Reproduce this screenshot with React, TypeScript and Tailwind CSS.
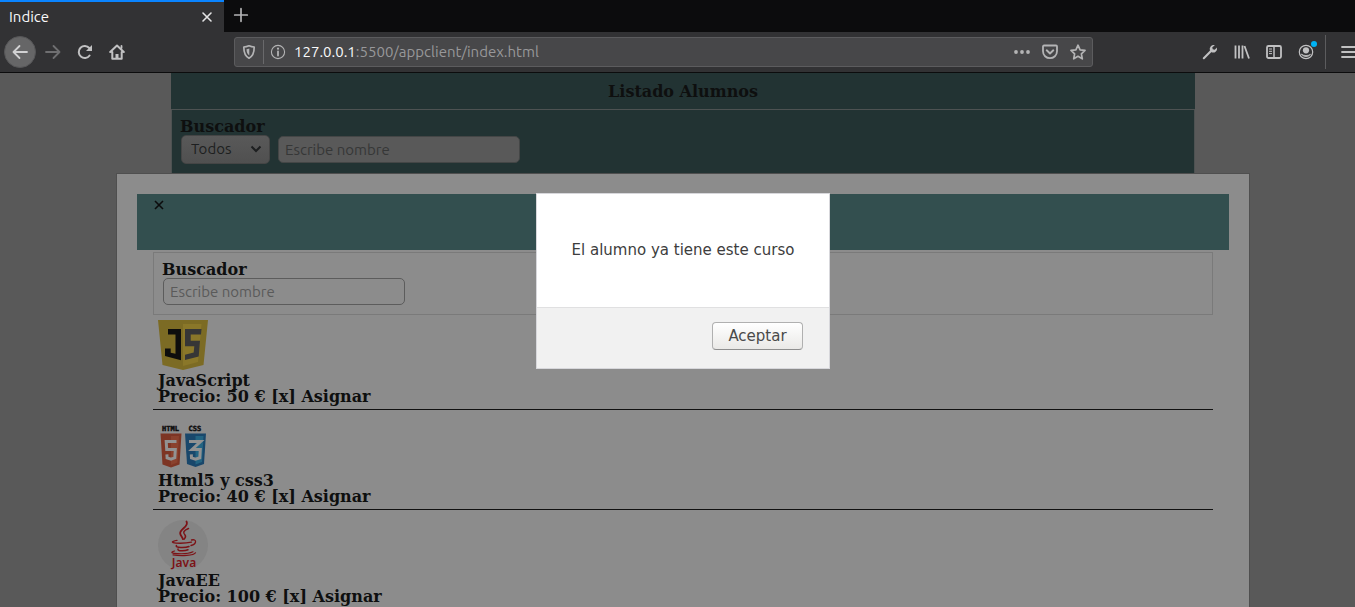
import type { ReactNode } from "react";

const uiFont = "font-['Ubuntu','Noto_Sans',sans-serif]";

function Icon({ children, className = "" }: { children: ReactNode; className?: string }) {
  return (
    <svg
      viewBox="0 0 16 16"
      className={`size-4 shrink-0 ${className}`}
      fill="none"
      stroke="currentColor"
      strokeWidth="1.8"
      strokeLinecap="round"
      strokeLinejoin="round"
      aria-hidden="true"
    >
      {children}
    </svg>
  );
}

function ToolButton({ label, className = "", children }: { label: string; className?: string; children: ReactNode }) {
  return (
    <button
      type="button"
      aria-label={label}
      className={`flex size-8 shrink-0 items-center justify-center text-[#c1c1c2] ${className}`}
    >
      {children}
    </button>
  );
}

function TabStrip() {
  return (
    <div className="flex h-8 bg-[#0c0c0d]">
      <div className="flex w-56 items-center justify-between border-t-2 border-[#0a84ff] bg-[#323234] pr-[9px] pl-[9px]">
        <span className="text-[15px] leading-5 text-[#f9f9fa]">Indice</span>
        <button type="button" aria-label="Cerrar pestaña" className="flex size-4 items-center justify-center text-[#e4e4e5]">
          <Icon>
            <path d="M4 4l8 8M12 4l-8 8" strokeWidth="1.6" />
          </Icon>
        </button>
      </div>
      <button type="button" aria-label="Nueva pestaña" className="flex w-[34px] items-center justify-center pb-0.5 text-[#b4b4b5]">
        <Icon>
          <path d="M8 1.700v12.600M1.700 8h12.600" strokeWidth="1.700" />
        </Icon>
      </button>
    </div>
  );
}

function AddressBar() {
  return (
    <div className="flex h-[30px] min-w-0 flex-1 items-center rounded-[3px] border border-[#5c5c5e] bg-[#474749] text-[#b4b4b5]">
      <div className="flex w-7 shrink-0 justify-center">
        <Icon>
          <path d="M8 1.800c2 .9 3.700 1.200 5.200 1.200 0 5.400-1.200 9.200-5.200 11.200C4 12.200 2.800 8.400 2.800 3 4.300 3 6 2.700 8 1.800z" strokeWidth="1.700" />
          <path d="M8.300 4.600c-1 .4-1.800.6-2.800.7.1 3 .8 4.900 2.800 6.200z" fill="currentColor" stroke="none" />
        </Icon>
      </div>
      <span className="mr-[6px] h-6 w-px bg-[#69696b]" />
      <Icon>
        <circle cx="8" cy="8" r="6.600" strokeWidth="1.100" />
        <path d="M8 7.500v4" strokeWidth="1.800" />
        <circle cx="8" cy="4.700" r="1.100" fill="currentColor" stroke="none" />
      </Icon>
      <span className="ml-2 flex-1 truncate text-[15px] leading-5 text-[#98989a]">
        <span className="text-[#f9f9fa]">127.0.0.1</span>:5500/appclient/index.html
      </span>
      <div className="flex shrink-0 items-center gap-3 pr-[6px]">
        <button type="button" aria-label="Acciones de página">
          <Icon>
            <g fill="currentColor" stroke="none">
              <circle cx="2" cy="8" r="1.900" />
              <circle cx="8" cy="8" r="1.900" />
              <circle cx="14" cy="8" r="1.900" />
            </g>
          </Icon>
        </button>
        <button type="button" aria-label="Guardar en Pocket">
          <Icon>
            <path d="M2 1.500h12a1 1 0 0 1 1 1V7.300c0 4-3.200 6.900-7 6.900S1 11.300 1 7.300V2.500a1 1 0 0 1 1-1z" strokeWidth="1.800" />
            <path d="M4.700 6.300L8 9.500l3.300-3.200" strokeWidth="1.900" />
          </Icon>
        </button>
        <button type="button" aria-label="Añadir a marcadores">
          <Icon>
            <path d="M8 1.200l2.100 4.600 4.900.6-3.600 3.400.9 5L8 12.300l-4.300 2.500.9-5L1 6.400l4.900-.6z" strokeWidth="1.700" />
          </Icon>
        </button>
      </div>
    </div>
  );
}

function Toolbar() {
  return (
    <div className="flex h-[41px] items-center border-b border-[#0c0c0d] bg-[#323234] pl-1">
      <ToolButton label="Atrás" className="mr-px rounded-full border border-[#565658] bg-[#666667]">
        <Icon className="text-[#d2d2d3]">
          <path d="M15 8H1.500M7.500 2L1.500 8l6 6" />
        </Icon>
      </ToolButton>
      <ToolButton label="Adelante">
        <Icon className="text-[#6f6f71]">
          <path d="M1 8h13.500M8.500 2l6 6-6 6" />
        </Icon>
      </ToolButton>
      <ToolButton label="Recargar">
        <Icon>
          <path d="M12.600 11.500A6 6 0 1 1 12.300 4" strokeWidth="2" />
          <path d="M15 1v6H9z" fill="currentColor" stroke="none" />
        </Icon>
      </ToolButton>
      <ToolButton label="Inicio">
        <Icon>
          <path d="M1.200 8L8 1.500 14.800 8M3.300 8v6.700h9.400V8" strokeWidth="2" />
          <path d="M8 15v-5" strokeWidth="3" strokeLinecap="butt" />
          <path d="M12.500 2v2" />
        </Icon>
      </ToolButton>
      <span className="w-[101px] shrink-0" />
      <AddressBar />
      <span className="w-[101px] shrink-0" />
      <ToolButton label="Herramientas">
        <Icon>
          <path d="M1.800 14.200L9 7" strokeWidth="2.100" />
          <path d="M12.900 1.300a4 4 0 0 0-5 5.100l2 2a4 4 0 0 0 5-4.900l-2.200 2.200-2-.4-.4-2z" fill="currentColor" stroke="none" />
        </Icon>
      </ToolButton>
      <ToolButton label="Catálogo">
        <Icon>
          <path d="M1.500 1.500v13M5 1.500v13M8.500 1.500v13M10.500 2l4.500 12.500" strokeLinecap="butt" />
        </Icon>
      </ToolButton>
      <ToolButton label="Barras laterales">
        <Icon>
          <rect x="1" y="2" width="14" height="12" rx="1.500" />
          <path d="M8 2v12" strokeWidth="1.500" />
          <path d="M3 5h3M3 7.300h3M3 9.600h3" strokeWidth="1" strokeLinecap="butt" />
        </Icon>
      </ToolButton>
      <ToolButton label="Cuenta" className="relative">
        <Icon>
          <circle cx="8" cy="8" r="6.700" strokeWidth="1.200" />
          <circle cx="8" cy="6.300" r="3.100" fill="currentColor" stroke="none" />
          <path d="M3.500 10.300c2.500 1.700 6.500 1.700 9 0a5.400 5.400 0 0 1-9 0z" fill="currentColor" strokeWidth=".8" />
        </Icon>
        <span className="absolute top-[5px] right-[5px] size-[6px] rounded-full bg-[#00b3f4]" />
      </ToolButton>
      <span className="mx-[3px] h-[34px] w-px shrink-0 bg-[#5c5c5e]" />
      <button type="button" aria-label="Abrir menú" className="flex h-8 w-[26px] shrink-0 items-center justify-end text-[#c1c1c2]">
        <Icon>
          <path d="M3 3h13M3 8h13M3 13h13" />
        </Icon>
      </button>
    </div>
  );
}

function StudentPage() {
  return (
    <main className="flex justify-center pl-[11px]">
      <section className="w-full max-w-[1024px] bg-[#223333]">
        <h1 className="pt-[11px] pb-[9px] text-center text-[16px] leading-4 font-bold">Listado Alumnos</h1>
        <form className="border border-[#4d5252] px-2 py-[9px]">
          <label htmlFor="student-name" className="block text-[16px] leading-4 font-bold">
            Buscador
          </label>
          <div className={`flex items-center gap-2 pl-px text-[15px] ${uiFont}`}>
            <div className="relative">
              <select
                aria-label="Filtro"
                className="block h-[29px] w-[89px] appearance-none rounded-[5px] border border-[#454545] bg-linear-to-b from-[#595959] to-[#505050] pl-[9px] text-[#1d1f20]"
              >
                <option>Todos</option>
              </select>
              <svg viewBox="0 0 12 8" className="pointer-events-none absolute top-[10px] right-2 h-2 w-3" fill="none" stroke="#1d1f20" strokeWidth="2" aria-hidden="true">
                <path d="M1.500 1.500L6 6l4.500-4.500" />
              </svg>
            </div>
            <input
              id="student-name"
              type="text"
              placeholder="Escribe nombre"
              className="h-[27px] w-[242px] rounded-[5px] border border-[#444646] bg-[#595959] px-1.5 placeholder:text-[#363737]"
            />
          </div>
        </form>
      </section>
    </main>
  );
}

function JsLogo() {
  return (
    <svg viewBox="0 0 50 50" className="size-[50px]" role="img" aria-label="JavaScript">
      <path d="M0 0h50l-4.500 45L25 50 4.500 45z" fill="#7c6b24" />
      <path d="M25 4h18.500l-3.500 38L25 46z" fill="#8a7729" />
      <path d="M10 9h13v31.200L7 36v-7.500h5.700v4.300l4.800 1V14.500H10z" fill="#0d0d0d" />
      <path d="M27 9h16.500l-.5 5.500H32.700v6.300H42l-1.300 15.700L27 40v-5.300l8.700-2.200.6-6.200H27z" fill="#363636" />
    </svg>
  );
}

function HtmlCssLogo() {
  return (
    <svg viewBox="0 0 50 50" className="size-[50px]" role="img" aria-label="HTML5 y CSS3">
      <g fill="#111111" stroke="#111111" strokeWidth=".5" fontFamily="DejaVu Sans Mono, monospace" fontWeight="700" fontSize="7">
        <text x="4" y="11">HTML</text>
        <text x="30.500" y="11">CSS</text>
      </g>
      <path d="M2.500 13.500h21l-2 31L13 47.500 4.500 44.500z" fill="#7d3524" />
      <path d="M13 16h8l-1.500 26.500L13 45z" fill="#8a412d" />
      <path d="M18.500 21.500H8.200l.5 8h8.600l-.5 8.300-3.800 1.400-3.900-1.400-.2-3.400" fill="none" stroke="#929292" strokeWidth="3" />
      <path d="M27 13.500h21l-2 30.500-8.500 3L29 44z" fill="#19476b" />
      <path d="M37.500 16h8L44 42l-6.500 2.500z" fill="#236482" />
      <path d="M31 21.500h11.700L34 29.500h8.300l-.5 8.300-4.300 1.400-4-1.400-.2-3.400" fill="none" stroke="#929292" strokeWidth="3" />
    </svg>
  );
}

function JavaLogo() {
  return (
    <svg viewBox="0 0 50 50" className="size-[50px]" role="img" aria-label="Java">
      <circle cx="25" cy="25" r="25" fill="#848484" />
      <g fill="none" stroke="#7c1216" strokeLinecap="round">
        <path d="M28.500 1.500c3 5-7 7.500-6.300 12 .3 2.200 2.300 3.500 2.800 5.700" strokeWidth="1.800" />
        <path d="M30.500 8.500c-5 2-6 4-3.500 6.500 1.200 1.400.2 3-1 4.200" strokeWidth="1.500" />
        <path d="M19 20.300c-6 1-6 2.500-1 2.800 5 .3 11 0 15.500-1" strokeWidth="1.300" />
        <path d="M33.500 20c5.500-1.500 5.500 4-.5 5.500" strokeWidth="1.300" />
        <path d="M18.500 25.500c-2 2.500 9 2.400 12.500 1M20 29c-1 2.300 6.500 2.300 10 .8" strokeWidth="1.500" />
        <path d="M16.500 31c-10 2.500 11 4.200 18.500.8M15 34.800c8 1.500 21 .8 22.500-2" strokeWidth="1.200" />
      </g>
      <text x="26" y="46.500" textAnchor="middle" fill="#7c1216" fontFamily="Noto Sans, sans-serif" fontWeight="600" fontSize="12">
        Java
      </text>
    </svg>
  );
}

const courses = [
  { name: "JavaScript", price: 50, logo: <JsLogo /> },
  { name: "Html5 y css3", price: 40, logo: <HtmlCssLogo /> },
  { name: "JavaEE", price: 100, logo: <JavaLogo /> },
];

function CourseModal() {
  return (
    <div className="absolute inset-0 flex items-start justify-center overflow-hidden pt-[100px] pl-[11px]">
      <section className="min-h-full w-full max-w-[1134px] border border-[#4f4f4f] bg-[#8c8c8c] p-5">
        <header className="h-14 bg-[#334f4f] px-4">
          <button type="button" aria-label="Cerrar" className="block h-[22px] w-3 text-[#0c0c0d]">
            <svg viewBox="0 0 12 12" className="size-3" fill="none" stroke="currentColor" strokeWidth="1.600" aria-hidden="true">
              <path d="M2 2l8 8M10 2l-8 8" />
            </svg>
          </button>
        </header>
        <div className="px-4 pt-0.5">
          <form className="border border-[#7a7a7a] px-2 py-[9px]">
            <label htmlFor="course-name" className="block text-[16px] leading-4 font-bold">
              Buscador
            </label>
            <div className="flex pl-px">
              <input
                id="course-name"
                type="text"
                placeholder="Escribe nombre"
                className={`h-[27px] w-[242px] rounded-[5px] border border-[#5c5c5c] bg-[#8c8c8c] px-1.5 text-[15px] placeholder:text-[#5a5a5a] ${uiFont}`}
              />
            </div>
          </form>
          <ul className="flex flex-col gap-[5px]">
            {courses.map((course) => (
              <li key={course.name} className="border-b border-[#111111] px-[5px] pt-[5px] pb-1 text-[16px] leading-4 font-bold">
                <div className="pb-[3px]">{course.logo}</div>
                <p>{course.name}</p>
                <p>
                  Precio: {course.price} € <a href="#eliminar">[x]</a> <a href="#asignar">Asignar</a>
                </p>
              </li>
            ))}
          </ul>
        </div>
      </section>
    </div>
  );
}

function AlertDialog() {
  return (
    <div className="absolute inset-0 flex items-start justify-center pt-[120px] pl-[11px] font-['DejaVu_Sans',sans-serif] text-[15px]">
      <div role="alertdialog" aria-describedby="alert-text" className="w-[294px] border border-[#d7d7db] bg-white">
        <p id="alert-text" className="px-4 pt-[46px] pb-[47px] text-center leading-5 whitespace-nowrap text-[#3d3d3d]">
          El alumno ya tiene este curso
        </p>
        <div className="flex justify-end border-t border-[#e0e0e1] bg-[#f1f1f1] px-[26px] pt-[14px] pb-[18px]">
          <button
            type="button"
            className="h-7 w-[91px] rounded-[4px] border border-[#b0b0b0] border-b-[#8e8e8e] bg-linear-to-b from-white to-[#eae9e7] text-[#4a4a4a]"
          >
            Aceptar
          </button>
        </div>
      </div>
    </div>
  );
}

export default function App() {
  return (
    <div className="flex h-screen flex-col overflow-hidden">
      <header className={`shrink-0 ${uiFont}`}>
        <TabStrip />
        <Toolbar />
      </header>
      <div className="relative min-h-0 flex-1 overflow-hidden bg-[#595959] font-['DejaVu_Serif',serif] text-[#0e0f0f]">
        <StudentPage />
        <CourseModal />
        <AlertDialog />
      </div>
    </div>
  );
}
